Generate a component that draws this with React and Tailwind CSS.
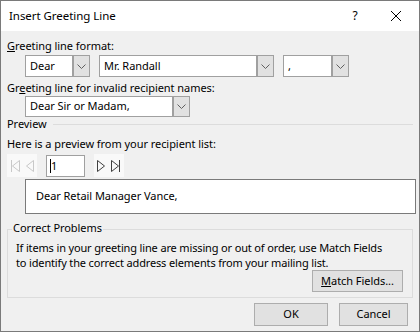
const font = { fontFamily: '"Noto Sans", "Segoe UI", sans-serif' };

const Arrow = () => (
  <svg width="9" height="5" viewBox="0 0 9 5">
    <path d="M0.5 0.5 L4.5 4.5 L8.5 0.5" fill="none" stroke="#606060" strokeWidth="1" />
  </svg>
);

const Combo = ({ value, w, h = "h-[22px]" }) => (
  <div className={`flex ${h} border border-[#a0a0a0] bg-white ${w}`}>
    <div className="flex-1 pl-[4px] flex items-center whitespace-nowrap">{value}</div>
    <div className="w-[17px] bg-[#e1e1e1] border-l-2 border-[#a0a0a0] flex items-center justify-center">
      <Arrow />
    </div>
  </div>
);

const Tri = ({ dir, bar, color }) => (
  <svg width="12" height="14" viewBox="0 0 12 14">
    {dir === "left" ? (
      <>
        {bar && <line x1="2.5" y1="1" x2="2.5" y2="13" stroke={color} />}
        <path d="M10.5 1.5 L3.5 7 L10.5 12.5 Z" fill="none" stroke={color} />
      </>
    ) : (
      <>
        <path d="M1.5 1.5 L8.5 7 L1.5 12.5 Z" fill="none" stroke={color} />
        {bar && <line x1="9.5" y1="1" x2="9.5" y2="13" stroke={color} />}
      </>
    )}
  </svg>
);

const Button = ({ children, w, h = "h-[23px]" }) => (
  <div className={`${h} ${w} border border-[#adadad] bg-[#e1e1e1] flex items-center justify-center whitespace-nowrap`}>
    {children}
  </div>
);

export default function App() {
  return (
    <div style={font} className="w-[420px] h-[332px] border border-[#7a7a7a] bg-[#f0f0f0] text-[11px] tracking-[-0.05px] text-black flex flex-col">
      <div className="h-[30px] bg-white flex items-center shrink-0">
        <div className="pl-[8px] flex-1 text-[11.5px]">Insert Greeting Line</div>
        <div className="w-[20px] text-center text-[12px] mr-[25px]">?</div>
        <svg width="12" height="12" viewBox="0 0 12 12" className="mr-[17px]">
          <path d="M1 1 L11 11 M11 1 L1 11" stroke="#000" strokeWidth="1" />
        </svg>
      </div>
      <div className="px-[6px] flex-1 flex flex-col">
        <div className="mt-[7px] h-[15px] leading-[15px]">
          <span className="underline">G</span>reeting line format:
        </div>
        <div className="flex mt-[2px] ml-[18px] gap-[9px]">
          <Combo value="Dear" w="w-[65px]" />
          <Combo value="Mr. Randall" w="w-[175px]" />
          <Combo value="," w="w-[66px]" />
        </div>
        <div className="mt-[3px] h-[15px] leading-[15px]">
          Gr<span className="underline">e</span>eting line for invalid recipient names:
        </div>
        <div className="mt-[1px] ml-[18px]">
          <Combo value="Dear Sir or Madam," w="w-[165px]" h="h-[21px]" />
        </div>
        <div className="flex items-center h-[15px]">
          <span>Preview</span>
          <div className="flex-1 ml-[6px] border-t border-[#dcdcdc]" />
        </div>
        <div className="mt-[4px] h-[15px] leading-[15px]">Here is a preview from your recipient list:</div>
        <div className="flex items-center mt-[3px] h-[23px]">
          <div className="w-[30px] h-[23px] bg-[#f9f9f9] flex items-center justify-center gap-[2px]">
            <Tri dir="left" bar color="#c8c8c8" />
            <Tri dir="left" color="#c8c8c8" />
          </div>
          <div className="ml-[9px] w-[39px] h-[22px] border border-[#a0a0a0] bg-white flex items-center pl-[3px]">
            <div className="w-[1px] h-[14px] bg-black" />
            <span className="leading-[20px]">1</span>
          </div>
          <div className="ml-[9px] w-[30px] h-[23px] bg-[#f9f9f9] flex items-center justify-center gap-[2px]">
            <Tri dir="right" color="#404040" />
            <Tri dir="right" bar color="#404040" />
          </div>
        </div>
        <div className="ml-[18px] mt-[2px] w-[391px] h-[35px] border border-[#7a7a7a] bg-white flex items-center pl-[10px]">
          Dear Retail Manager Vance,
        </div>
        <div className="relative mt-[15px] h-[69px] border border-[#dcdcdc] pt-[10px] pl-[8px] pr-[8px]">
          <div className="absolute -top-[10px] left-[4px] px-[1px] bg-[#f0f0f0] leading-[15px]">Correct Problems</div>
          <div className="leading-[15px] whitespace-nowrap tracking-[-0.15px]">
            If items in your greeting line are missing or out of order, use Match Fields
            <br />
            to identify the correct address elements from your mailing list.
          </div>
          <div className="flex justify-end mr-[1px]">
            <Button w="w-[91px]" h="h-[22px]">
              <span><span className="underline">M</span>atch Fields...</span>
            </Button>
          </div>
        </div>
        <div className="flex justify-end gap-[11px] mt-[5px] mr-[5px]">
          <Button w="w-[74px]">OK</Button>
          <Button w="w-[69px]">Cancel</Button>
        </div>
      </div>
    </div>
  );
}
